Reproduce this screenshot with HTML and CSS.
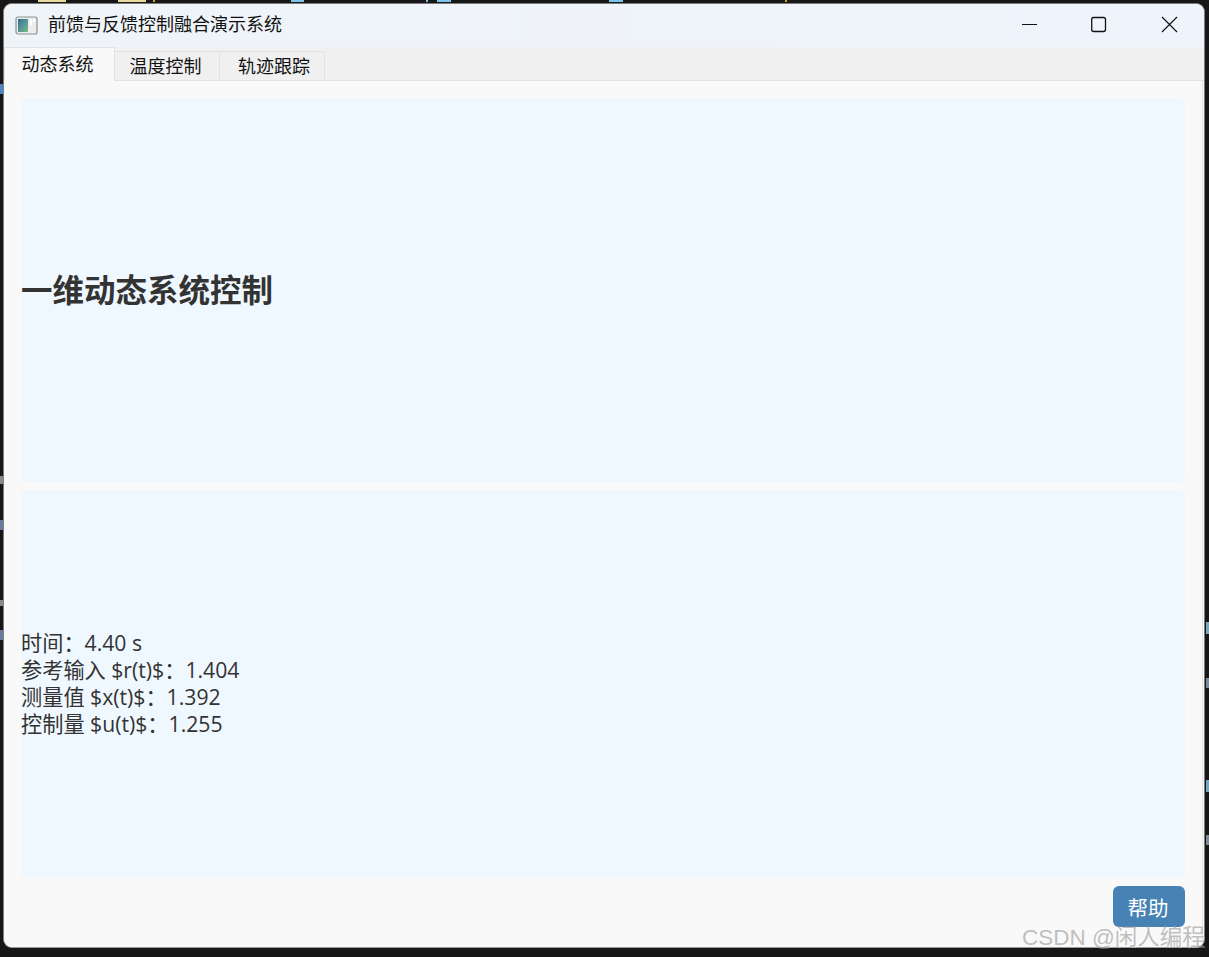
FILE: index.html
```html
<!DOCTYPE html>
<html lang="zh-CN">
<head>
<meta charset="utf-8">
<title>前馈与反馈控制融合演示系统</title>
<link rel="stylesheet" href="styles.css">
</head>
<body>
<div class="window">
  <header class="titlebar">
    <svg class="app-icon" width="24" height="20" viewBox="0 0 24 20">
      <defs><linearGradient id="g" x1="0" y1="0" x2="1" y2="1"><stop offset="0" stop-color="#2f6f9f"/><stop offset="1" stop-color="#7fb98a"/></linearGradient></defs>
      <rect x="1" y="1" width="21" height="17" rx="2" fill="#ececec" stroke="#8a8f93" stroke-width="1.2"/>
      <rect x="3" y="3" width="10" height="13" fill="url(#g)"/>
      <rect x="15" y="3" width="2" height="6" fill="#fff"/>
      <rect x="18" y="3" width="2" height="3" fill="#fff"/>
    </svg>
    <span class="title">前馈与反馈控制融合演示系统</span>
    <div class="win-controls">
      <svg class="ctl" width="70" height="43" viewBox="0 0 70 43"><path d="M28 20.5H43" stroke="#111" stroke-width="1" fill="none"/></svg>
      <svg class="ctl" width="70" height="43" viewBox="0 0 70 43"><rect x="27.7" y="13.5" width="13.8" height="14" rx="2" stroke="#111" stroke-width="1.3" fill="none"/></svg>
      <svg class="ctl" width="70" height="43" viewBox="0 0 70 43"><path d="M28 13L43 28M43 13L28 28" stroke="#111" stroke-width="1.2" fill="none"/></svg>
    </div>
  </header>
  <nav class="tabs">
    <div class="tab active">动态系统</div>
    <div class="tab tab-mid">温度控制</div>
    <div class="tab tab-wide">轨迹跟踪</div>
  </nav>
  <main class="pane">
    <section class="panel">
      <h1 class="heading">一维动态系统控制</h1>
    </section>
    <section class="panel">
      <div class="readout">
        <div>时间：4.40 s</div>
        <div>参考输入 $r(t)$：1.404</div>
        <div>测量值 $x(t)$：1.392</div>
        <div>控制量 $u(t)$：1.255</div>
      </div>
    </section>
    <div class="actions"><button class="help">帮助</button></div>
  </main>
</div>
<div class="watermark">CSDN @闲人编程</div>
</body>
</html>
```
FILE: styles.css
```css
* { box-sizing: border-box; }
html, body { margin: 0; height: 100%; }
body {
  width: 1209px;
  height: 957px;
  overflow: hidden;
  background-color: #171717;
  background-repeat: no-repeat;
  background-image:
    linear-gradient(#e6dca0, #e6dca0), linear-gradient(#e6dca0, #e6dca0), linear-gradient(#c9a227, #c9a227),
    linear-gradient(#7cc4ea, #7cc4ea), linear-gradient(#7cc4ea, #7cc4ea), linear-gradient(#7cc4ea, #7cc4ea),
    linear-gradient(#7cc4ea, #7cc4ea), linear-gradient(#c9a227, #c9a227),
    linear-gradient(#4a86c8, #4a86c8), linear-gradient(#8a8a8a, #8a8a8a), linear-gradient(#6a7a9a, #6a7a9a),
    linear-gradient(#8a8a8a, #8a8a8a), linear-gradient(#6a7a9a, #6a7a9a),
    linear-gradient(#7aa6c0, #7aa6c0), linear-gradient(#7a8a9a, #7a8a9a),
    linear-gradient(#7aa6c0, #7aa6c0), linear-gradient(#7a8a9a, #7a8a9a);
  background-size:
    28px 2px, 28px 2px, 2px 2px,
    13px 2px, 2px 2px, 14px 2px,
    14px 2px, 2px 2px,
    3px 10px, 3px 8px, 3px 10px,
    3px 6px, 3px 10px,
    3px 12px, 3px 10px,
    3px 12px, 3px 10px;
  background-position:
    38px 0, 118px 0, 153px 0,
    291px 0, 426px 0, 437px 0,
    609px 0, 785px 0,
    0 84px, 0 476px, 0 520px,
    0 600px, 0 630px,
    1206px 622px, 1206px 678px,
    1206px 780px, 1206px 835px;
  padding: 3px 4px 9px 3px;
  font-family: "Open Sans", "Noto Sans CJK SC", sans-serif;
  position: relative;
}
.window {
  height: 945px;
  display: flex;
  flex-direction: column;
  background: #f9f9f9;
  border: 1px solid #7d7d7d;
  border-bottom-color: #9a9a9a;
  border-radius: 9px;
  overflow: hidden;
}
.titlebar {
  height: 43px;
  flex: none;
  display: flex;
  align-items: center;
  padding-left: 11px;
  background: linear-gradient(90deg, #eff4f8, #eff3fb);
}
.app-icon { flex: none; margin-right: 9px; }
.title {
  font-family: "Noto Sans CJK SC", sans-serif;
  font-size: 18px;
  line-height: 24px;
  margin-top: -5px;
  color: #111;
}
.win-controls { margin-left: auto; display: flex; }
.ctl { display: block; }
.tabs {
  height: 34px;
  flex: none;
  display: flex;
  align-items: flex-end;
  background: #f0f0f0;
  border-bottom: 1px solid #e2e2e2;
}
.tab {
  height: 30px;
  margin-bottom: -1px;
  display: flex;
  align-items: center;
  justify-content: center;
  margin-left: -1px;
  font-family: "Noto Sans CJK SC", sans-serif;
  font-size: 18px;
  color: #111;
  background: #f0f0f0;
  border: 1px solid #e2e2e2;
}
.tab.tab-mid { width: 106px; padding: 0 3px 2px 0; }
.tab.tab-wide { width: 106px; padding: 0 0 2px 4px; }
.tab.active {
  width: 111px;
  height: 34px;
  margin-left: 0;
  padding: 0 4px 3px 0;
  background: #f9f9f9;
  border-bottom-color: #f9f9f9;
}
.pane {
  flex: 1;
  display: flex;
  flex-direction: column;
  gap: 8px;
  padding: 17px 17px 19px 17px;
  background: #f9f9f9;
  border-right: 1px solid #e4e4e4;
  margin-right: 1px;
  min-height: 0;
}
.panel {
  background: #f0f8ff;
  border-radius: 4px;
  display: flex;
  align-items: center;
  height: 384px;
  flex: none;
}
.panel + .panel { height: 387px; }
.heading {
  margin: -4px 0 0;
  font-family: "Noto Sans CJK SC", sans-serif;
  font-size: 31.5px;
  line-height: 40px;
  font-weight: 700;
  color: #333;
}
.readout {
  margin-top: -2px;
  font-size: 21.2px;
  line-height: 27px;
  color: #333;
}
.actions {
  display: flex;
  justify-content: flex-end;
  padding-top: 1px;
}
.help {
  width: 72px;
  height: 41px;
  border: 0;
  border-radius: 6px;
  background: #4682b4;
  color: #fff;
  font-family: "Noto Sans CJK SC", sans-serif;
  font-size: 20.5px;
  padding: 0 2px 0 0;
}
.watermark {
  position: absolute;
  left: 1022px;
  top: 922px;
  font-family: "Liberation Sans", "Noto Sans CJK SC", sans-serif;
  font-size: 22.5px;
  line-height: 32px;
  white-space: nowrap;
  color: rgba(150, 150, 150, 0.6);
  text-shadow: 1px 1px 0 rgba(255,255,255,0.3);
}
```
